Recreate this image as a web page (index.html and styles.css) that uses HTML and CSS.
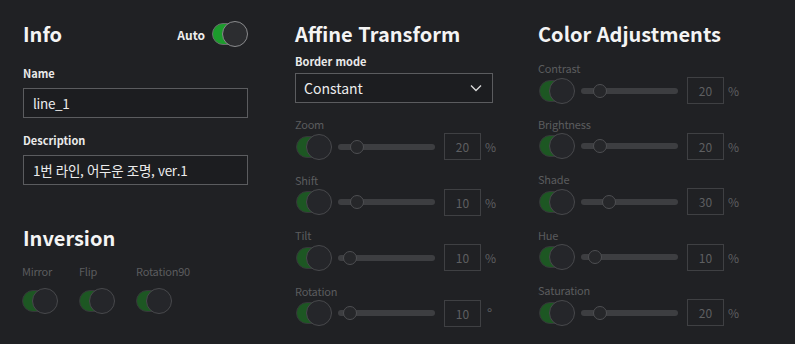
FILE: index.html
```html
<!DOCTYPE html>
<html lang="ko">
<head>
  <meta charset="UTF-8">
  <title>Image Settings</title>
  <link rel="stylesheet" href="styles.css">
</head>
<body>
  <div class="panel">
    <!-- Info / Inversion -->
    <section class="column">
      <div class="head-row">
        <h2>Info</h2>
        <div class="auto">
          <span>Auto</span>
          <span class="toggle on"><span class="track"></span><span class="knob"></span></span>
        </div>
      </div>
      <label class="field-label">Name</label>
      <div class="text-box">line_1</div>
      <label class="field-label desc">Description</label>
      <div class="text-box">1번 라인, 어두운 조명, ver.1</div>

      <h2 class="inversion">Inversion</h2>
      <div class="flags">
        <div class="flag">
          <span class="dim-label">Mirror</span>
          <span class="toggle"><span class="track"></span><span class="knob"></span></span>
        </div>
        <div class="flag">
          <span class="dim-label">Flip</span>
          <span class="toggle"><span class="track"></span><span class="knob"></span></span>
        </div>
        <div class="flag">
          <span class="dim-label">Rotation90</span>
          <span class="toggle"><span class="track"></span><span class="knob"></span></span>
        </div>
      </div>
    </section>

    <!-- Affine Transform -->
    <section class="column">
      <h2>Affine Transform</h2>
      <label class="field-label border-mode">Border mode</label>
      <div class="select-box">
        <span>Constant</span>
        <svg class="chevron" width="12" height="8" viewBox="0 0 12 8"><path d="M1 1.5 L6 6.5 L11 1.5" fill="none" stroke="#d8d8d8" stroke-width="1.4"/></svg>
      </div>
      <div class="sliders">
        <div class="slider-group">
          <span class="dim-label">Zoom</span>
          <div class="slider-row">
            <span class="toggle"><span class="track"></span><span class="knob"></span></span>
            <div class="range"><span class="thumb" style="left: 20%"></span></div>
            <div class="value">20</div><span class="unit">%</span>
          </div>
        </div>
        <div class="slider-group">
          <span class="dim-label">Shift</span>
          <div class="slider-row">
            <span class="toggle"><span class="track"></span><span class="knob"></span></span>
            <div class="range"><span class="thumb" style="left: 20%"></span></div>
            <div class="value">10</div><span class="unit">%</span>
          </div>
        </div>
        <div class="slider-group">
          <span class="dim-label">Tilt</span>
          <div class="slider-row">
            <span class="toggle"><span class="track"></span><span class="knob"></span></span>
            <div class="range"><span class="thumb" style="left: 12%"></span></div>
            <div class="value">10</div><span class="unit">%</span>
          </div>
        </div>
        <div class="slider-group">
          <span class="dim-label">Rotation</span>
          <div class="slider-row">
            <span class="toggle"><span class="track"></span><span class="knob"></span></span>
            <div class="range"><span class="thumb" style="left: 12%"></span></div>
            <div class="value">10</div><span class="unit deg">°</span>
          </div>
        </div>
      </div>
    </section>

    <!-- Color Adjustments -->
    <section class="column">
      <h2>Color Adjustments</h2>
      <div class="sliders">
        <div class="slider-group">
          <span class="dim-label">Contrast</span>
          <div class="slider-row">
            <span class="toggle"><span class="track"></span><span class="knob"></span></span>
            <div class="range"><span class="thumb" style="left: 20%"></span></div>
            <div class="value">20</div><span class="unit">%</span>
          </div>
        </div>
        <div class="slider-group">
          <span class="dim-label">Brightness</span>
          <div class="slider-row">
            <span class="toggle"><span class="track"></span><span class="knob"></span></span>
            <div class="range"><span class="thumb" style="left: 20%"></span></div>
            <div class="value">20</div><span class="unit">%</span>
          </div>
        </div>
        <div class="slider-group">
          <span class="dim-label">Shade</span>
          <div class="slider-row">
            <span class="toggle"><span class="track"></span><span class="knob"></span></span>
            <div class="range"><span class="thumb" style="left: 29%"></span></div>
            <div class="value">30</div><span class="unit">%</span>
          </div>
        </div>
        <div class="slider-group">
          <span class="dim-label">Hue</span>
          <div class="slider-row">
            <span class="toggle"><span class="track"></span><span class="knob"></span></span>
            <div class="range"><span class="thumb" style="left: 14%"></span></div>
            <div class="value">10</div><span class="unit">%</span>
          </div>
        </div>
        <div class="slider-group">
          <span class="dim-label">Saturation</span>
          <div class="slider-row">
            <span class="toggle"><span class="track"></span><span class="knob"></span></span>
            <div class="range"><span class="thumb" style="left: 20%"></span></div>
            <div class="value">20</div><span class="unit">%</span>
          </div>
        </div>
      </div>
    </section>
  </div>
</body>
</html>
```

FILE: styles.css
```css
* { box-sizing: border-box; }
html, body {
  margin: 0;
  height: 100%;
  background: #202124;
}
body {
  font-family: "Noto Sans CJK KR", "Noto Sans", sans-serif;
  color: #e6e6e6;
  overflow: hidden;
}
.panel {
  display: grid;
  grid-template-columns: 225px 198px 200px;
  column-gap: 47px;
  padding: 21px 0 0 23px;
}
.column {
  display: flex;
  flex-direction: column;
}
.column:last-child { margin-left: -2px; }
h2 {
  margin: 0;
  font-size: 20px;
  line-height: 26px;
  font-weight: 700;
  color: #f4f4f4;
}

/* Info */
.head-row {
  display: flex;
  align-items: center;
  justify-content: space-between;
}
.auto {
  display: flex;
  align-items: center;
  gap: 7px;
  font-size: 12px;
  font-weight: 700;
  color: #eee;
}
.field-label {
  display: block;
  margin-top: 18px;
  font-size: 11px;
  line-height: 16px;
  font-weight: 700;
  color: #eaeaea;
}
.field-label.desc { margin-top: 14px; }
.field-label.border-mode { margin-top: 6px; }
.text-box, .select-box {
  margin-top: 7px;
  height: 30px;
  border: 1.5px solid #5b5c5f;
  background: #1c1d20;
  padding: 0 9px;
  display: flex;
  align-items: center;
  font-size: 13.5px;
  letter-spacing: -0.3px;
  color: #ececec;
}
.select-box {
  margin-top: 4px;
  justify-content: space-between;
  font-size: 14px;
  letter-spacing: 0;
  padding: 0 8px 0 8px;
}
.chevron { margin-right: 2px; }

.inversion { margin-top: 40px; }
.flags {
  display: grid;
  grid-template-columns: 57px 57px auto;
  margin-top: 12px;
  margin-left: -1px;
}
.flag {
  display: flex;
  flex-direction: column;
  gap: 9px;
}

/* toggles */
.toggle {
  position: relative;
  display: inline-block;
  width: 36px;
  height: 26px;
  flex: none;
}
.toggle .track {
  position: absolute;
  left: 0;
  top: 2px;
  width: 30px;
  height: 22px;
  border-radius: 11px;
  background: #1d5723;
  border: 1px solid #36373a;
}
.toggle .knob {
  position: absolute;
  right: 0;
  top: 0;
  width: 26px;
  height: 26px;
  border-radius: 50%;
  background: #25262a;
  border: 1.5px solid #48494c;
}
.toggle.on .track {
  background: #1c9b2c;
  border-color: #6a6b6d;
}
.toggle.on .knob {
  background: #2c2d30;
  border-color: #8a8b8d;
}

.dim-label {
  font-size: 11px;
  line-height: 16px;
  letter-spacing: -0.2px;
  color: #5b5c5e;
}

/* sliders */
.sliders {
  display: flex;
  flex-direction: column;
  gap: 11.5px;
  margin-top: 13px;
}
.slider-group {
  display: flex;
  flex-direction: column;
  gap: 1px;
}
.slider-row {
  display: flex;
  align-items: center;
  height: 27px;
  margin-left: 1px;
}
.range {
  position: relative;
  flex: none;
  margin-left: 6px;
  width: 97px;
  height: 6px;
  border-radius: 3px;
  background: #3d3e41;
}
.thumb {
  position: absolute;
  top: 50%;
  width: 14px;
  height: 14px;
  border-radius: 50%;
  background: #26272a;
  border: 1.5px solid #4e4f52;
  transform: translate(-50%, -50%);
}
.value {
  flex: none;
  margin-left: 9px;
  width: 37px;
  height: 27px;
  border: 1.5px solid #3f4043;
  display: flex;
  align-items: center;
  justify-content: center;
  font-size: 12px;
  color: #5e5f61;
}
.unit {
  flex: none;
  margin-left: 4px;
  font-size: 12px;
  color: #5e5f61;
}
.unit.deg {
  margin-left: 6px;
  font-size: 14px;
}
```
